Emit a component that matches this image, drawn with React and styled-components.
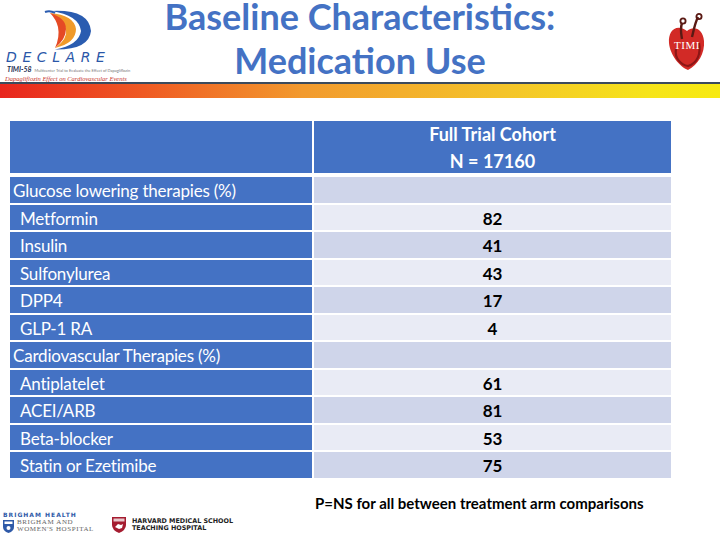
import React from 'react';
import styled, { createGlobalStyle } from 'styled-components';

const GlobalStyle = createGlobalStyle`
html, body {
  margin: 0;
  padding: 0;
  background: #ffffff;
}
body {
  width: 720px;
  height: 540px;
  overflow: hidden;
  font-family: Lato, "Open Sans", sans-serif;
}
`;

const Page = styled.div`
width: 720px;
height: 540px;
display: flex;
flex-direction: column;
`;

const Header = styled.div`
height: 82px;
display: grid;
grid-template-columns: 140px 1fr 140px;
align-items: start;
`;

const LeftLogo = styled.div`
display: flex;
flex-direction: column;
align-items: flex-start;
padding: 9px 0 0 5px;
`;

const Declare = styled.div`
font-family: "DejaVu Sans", sans-serif;
font-style: italic;
font-size: 14px;
line-height: 15px;
letter-spacing: 5.6px;
color: #2a57a8;
margin-left: 1px;
`;

const Tagline = styled.div`
display: flex;
align-items: baseline;
gap: 3px;
font-size: 4px;
line-height: 8px;
color: #777;
margin-left: 2px;
white-space: nowrap;
b {
  font-size: 7px;
  color: #1d2d52;
  font-style: italic;
}
`;

const RedLine = styled.div`
font-family: "Liberation Serif", serif;
font-style: italic;
font-size: 6.5px;
line-height: 7px;
color: #c8332a;
white-space: nowrap;
`;

const Title = styled.h1`
margin: 0;
display: flex;
flex-direction: column;
align-items: center;
gap: 14px;
font-family: Lato, sans-serif;
font-weight: 700;
font-size: 36px;
line-height: 30px;
color: #4472c4;
white-space: nowrap;
padding-top: 1px;
`;

const RightLogo = styled.div`
display: flex;
justify-content: flex-end;
padding: 13px 14px 0 0;
`;

const Bar = styled.div`
height: 14px;
border-top: 2px solid #3b4a5c;
background: linear-gradient(to right, #e8251d 0%, #ef5a23 20%, #f29a2e 42%, #f4c42a 70%, #f6e41a 90%, #f7ea12 100%);
`;

const TableArea = styled.div`
padding: 23px 0 0 10px;
`;

const Grid = styled.div`
display: grid;
grid-template-columns: 302px 357px;
column-gap: 2px;
row-gap: 2px;
`;

const HeadCell = styled.div`
height: 52px;
margin-bottom: 2px;
background: #4472c4;
color: #ffffff;
font-weight: 700;
font-size: 18px;
line-height: 27px;
text-align: center;
box-sizing: border-box;
`;

const LabelCell = styled.div`
height: 25.5px;
background: #4472c4;
color: #ffffff;
font-size: 17px;
letter-spacing: -0.2px;
display: flex;
align-items: center;
padding-left: ${p => (p.$sub ? '10px' : '3px')};
padding-top: 2px;
box-sizing: border-box;
white-space: nowrap;
`;

const ValueCell = styled.div`
height: 25.5px;
background: ${p => (p.$dark ? '#cfd5ea' : '#e9ebf5')};
color: #000000;
font-weight: 700;
font-size: 17px;
display: flex;
align-items: center;
justify-content: center;
padding-top: 2px;
box-sizing: border-box;
`;

const Footer = styled.div`
flex: 1;
display: grid;
grid-template-columns: 315px 1fr;
`;

const Logos = styled.div`
display: flex;
align-items: center;
gap: 18px;
padding: 27px 0 0 3px;
`;

const Brigham = styled.div`
display: flex;
flex-direction: column;
`;

const BrighamHead = styled.div`
font-family: "DejaVu Sans", sans-serif;
font-weight: 700;
font-size: 6px;
letter-spacing: 1px;
color: #2f5aa8;
line-height: 8px;
`;

const BrighamRow = styled.div`
display: flex;
align-items: center;
gap: 3px;
`;

const SerifSmall = styled.div`
font-family: "Liberation Serif", serif;
font-size: 7px;
line-height: 7px;
color: #666;
letter-spacing: 0.6px;
`;

const Harvard = styled.div`
display: flex;
align-items: center;
gap: 6px;
padding-top: 6px;
`;

const HarvardText = styled.div`
font-family: "DejaVu Sans", sans-serif;
font-weight: 700;
font-size: 6.4px;
line-height: 7.5px;
color: #222;
`;

const Note = styled.div`
font-weight: 700;
font-size: 15px;
color: #000;
padding-top: 16px;
`;

const rows = [
  { label: 'Glucose lowering therapies (%)', value: '' },
  { label: 'Metformin', value: '82', sub: true },
  { label: 'Insulin', value: '41', sub: true },
  { label: 'Sulfonylurea', value: '43', sub: true },
  { label: 'DPP4', value: '17', sub: true },
  { label: 'GLP-1 RA', value: '4', sub: true },
  { label: 'Cardiovascular Therapies (%)', value: '' },
  { label: 'Antiplatelet', value: '61', sub: true },
  { label: 'ACEI/ARB', value: '81', sub: true },
  { label: 'Beta-blocker', value: '53', sub: true },
  { label: 'Statin or Ezetimibe', value: '75', sub: true },
];

const DeclareMark = () => (
  <svg width="110" height="41" viewBox="0 0 110 41" style={{ marginLeft: 20 }}>
    <path d="M26 2 Q64 0 66 22 Q64 41 30 40.5 Q54 36 56 22 Q54 6 26 2 Z" fill="#2a5cb0" />
    <path d="M25 4 Q49 6 51 20 Q51 34 30 39 Q43 30 41 20 Q37 9 25 4 Z" fill="#f09a2a" />
    <path d="M25 4 Q41 9 41 20 Q41 30 30 39 Q35 28 33 18 Q31 10 25 4 Z" fill="#e54a25" />
    <path d="M20 3 Q25 1 30 4" stroke="#2a5cb0" strokeWidth="2" fill="none" />
  </svg>
);

const TimiMark = () => (
  <svg width="38" height="58" viewBox="0 0 38 58">
    <path d="M19 18 C8 10 0 18 1 30 C2 42 12 54 20 57 C30 52 37 40 36 28 C35 16 26 12 19 18 Z" fill="#d22a26" />
    <path d="M8 36 C6 46 14 52 20 53 C30 50 33 40 31 30" stroke="#8c1616" strokeWidth="2.2" fill="none" />
    <path d="M14 26 C13 20 12 16 14 10" stroke="#5a1a14" strokeWidth="2.4" fill="none" />
    <circle cx="15" cy="8" r="2.6" fill="none" stroke="#5a1a14" strokeWidth="1.8" />
    <path d="M24 24 C26 16 27 10 30 4" stroke="#5a1a14" strokeWidth="2.4" fill="none" />
    <circle cx="31" cy="3.5" r="2.6" fill="none" stroke="#5a1a14" strokeWidth="1.8" />
    <text x="19" y="36" textAnchor="middle" fill="#ffffff" fontFamily="Liberation Serif, serif" fontSize="11" letterSpacing="0.5">TIMI</text>
  </svg>
);

const BrighamShield = () => (
  <svg width="11" height="13" viewBox="0 0 11 13">
    <path d="M0 0 H11 V7 Q11 11 5.5 13 Q0 11 0 7 Z" fill="#2f5aa8" />
    <rect x="1.5" y="1.5" width="8" height="2.5" fill="#ffffff" />
    <circle cx="5.5" cy="8" r="2" fill="#ffffff" />
  </svg>
);

const HarvardShield = () => (
  <svg width="14" height="16" viewBox="0 0 14 16">
    <path d="M0 0 H14 V8 Q14 13 7 16 Q0 13 0 8 Z" fill="#a51c30" />
    <rect x="1.5" y="1.5" width="11" height="3" fill="#e8c8cc" />
    <path d="M3 10 L6 7 L9 8 L11 7 L10 11 L7 12 Z" fill="#ffffff" />
  </svg>
);

export default function App() {
  return (
    <>
      <GlobalStyle />
      <Page>
        <Header>
          <LeftLogo>
            <DeclareMark />
            <Declare>DECLARE</Declare>
            <Tagline><b>TIMI-58</b><span>Multicenter Trial to Evaluate the Effect of Dapagliflozin</span></Tagline>
            <RedLine>Dapagliflozin Effect on Cardiovascular Events</RedLine>
          </LeftLogo>
          <Title>
            <span>Baseline Characteristics:</span>
            <span>Medication Use</span>
          </Title>
          <RightLogo>
            <TimiMark />
          </RightLogo>
        </Header>
        <Bar />
        <TableArea>
          <Grid>
            <HeadCell />
            <HeadCell>
              Full Trial Cohort
              <br />
              N = 17160
            </HeadCell>
            {rows.map((r, i) => (
              <React.Fragment key={r.label}>
                <LabelCell $sub={r.sub}>{r.label}</LabelCell>
                <ValueCell $dark={i % 2 === 0}>{r.value}</ValueCell>
              </React.Fragment>
            ))}
          </Grid>
        </TableArea>
        <Footer>
          <Logos>
            <Brigham>
              <BrighamHead>BRIGHAM HEALTH</BrighamHead>
              <BrighamRow>
                <BrighamShield />
                <SerifSmall>
                  BRIGHAM AND
                  <br />
                  WOMEN'S HOSPITAL
                </SerifSmall>
              </BrighamRow>
            </Brigham>
            <Harvard>
              <HarvardShield />
              <HarvardText>
                HARVARD MEDICAL SCHOOL
                <br />
                TEACHING HOSPITAL
              </HarvardText>
            </Harvard>
          </Logos>
          <Note>P=NS for all between treatment arm comparisons</Note>
        </Footer>
      </Page>
    </>
  );
}
